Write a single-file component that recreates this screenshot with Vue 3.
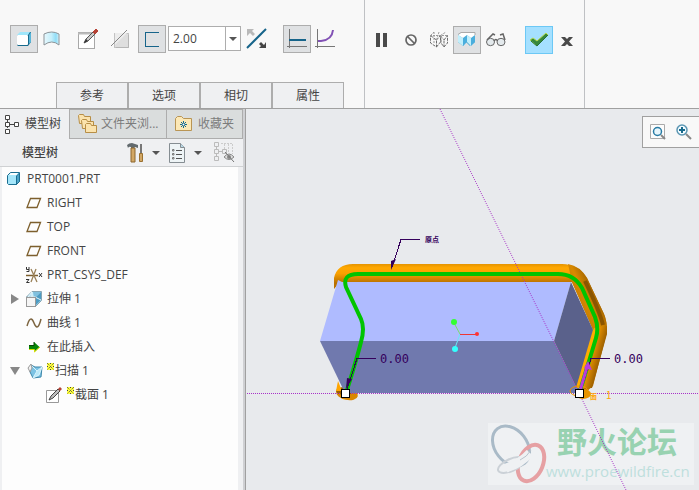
<script setup>
import { ref } from 'vue'

const thickness = ref('2.00')
const ribbonTabs = ['参考', '选项', '相切', '属性']
const tree = [
  { label: 'PRT0001.PRT', icon: 'part', level: 0 },
  { label: 'RIGHT', icon: 'plane', level: 1 },
  { label: 'TOP', icon: 'plane', level: 1 },
  { label: 'FRONT', icon: 'plane', level: 1 },
  { label: 'PRT_CSYS_DEF', icon: 'csys', level: 1 },
  { label: '拉伸 1', icon: 'extrude', level: 1, toggle: 'closed' },
  { label: '曲线 1', icon: 'curve', level: 1 },
  { label: '在此插入', icon: 'insert', level: 1 },
  { label: '扫描 1', icon: 'sweep', level: 1, toggle: 'open', busy: true },
  { label: '截面 1', icon: 'sketch', level: 2, busy: true }
]
</script>

<template>
  <div class="app">
    <header class="ribbon">
      <section class="group options">
        <div class="tools">
          <button class="tool on" aria-label="实体">
            <svg width="16" height="16" viewBox="0 0 16 16">
              <path d="M1 5 5 1H15V11L12 15H2L1 14Z" fill="#176a8c" />
              <path d="M1 4 4 1H14L12 4Z" fill="#9fe6fb" /><path d="M13 4 15 1V11L13 13Z" fill="#58b5d8" />
              <rect x="1" y="4" width="11" height="10" rx="1" fill="#fff" />
            </svg>
          </button>
          <button class="tool" aria-label="曲面">
            <svg width="18" height="16" viewBox="0 0 18 16">
              <defs><linearGradient id="surf"><stop offset="0" stop-color="#e8f8fd" /><stop offset=".5" stop-color="#c4effb" /><stop offset=".8" stop-color="#8fdcf6" /><stop offset="1" stop-color="#d8f4fc" /></linearGradient></defs>
              <path d="M1 3Q9-1 16 3V14Q9 8 1 14Z" fill="url(#surf)" stroke="#8c9499" />
            </svg>
          </button>
          <button class="tool gap-a" aria-label="草绘">
            <svg width="22" height="22" viewBox="0 0 22 22">
              <rect x="1.500" y="4.500" width="16" height="16" fill="#fff" stroke="#a8a8a8" /><path d="M1 5.500H18" stroke="#bbb" stroke-width="2" />
              <path d="M7 15 9 11 17 3 19 5 11 13Z" fill="#c9c9c9" stroke="#555" /><path d="M7 15 9 11 11 13Z" fill="#333" /><path d="M16 4 19 1 21 3 18 6Z" fill="#b64235" stroke="#b64235" />
            </svg>
          </button>
          <button class="tool gap-b" aria-label="移除材料">
            <svg width="18" height="20" viewBox="0 0 18 20">
              <rect x="3.500" y="4.500" width="14" height="14" fill="#dedede" stroke="#999" stroke-dasharray="1 1" /><path d="M4 4H16L4 16Z" fill="#ececec" /><path d="M0 17 16 1" stroke="#888" />
              <path d="M5 18.500H17.500V6" fill="none" stroke="#b5b5b5" />
            </svg>
          </button>
          <button class="tool on gap-b" aria-label="薄板">
            <svg width="16" height="16" viewBox="0 0 16 16"><path d="M15 1H1V15H15" fill="none" stroke="#16648a" stroke-width="1" shape-rendering="crispEdges" /></svg>
          </button>
          <div class="combo">
            <input v-model="thickness" aria-label="厚度" />
            <button aria-label="选择厚度"><span class="caret"></span></button>
          </div>
          <button class="tool" aria-label="反向">
            <svg width="22" height="22" viewBox="0 0 22 22">
              <path d="M1 20 20 1" stroke="#16648a" stroke-width="2" />
              <path d="M1 1H8L6 3 9 6 7 8 4 5 1 8Z" fill="#b9b9b9" /><path d="M20 20H13L15 18 13 16 15 14 18 17 20 14Z" fill="#444" />
            </svg>
          </button>
          <button class="tool on gap-c" aria-label="恒定截面">
            <svg width="20" height="20" viewBox="0 0 20 20"><path d="M2.500 0V19M0 17.500H20" stroke="#777" fill="none" /><path d="M2 11H19" stroke="#16648a" stroke-width="2" /></svg>
          </button>
          <button class="tool" aria-label="可变截面">
            <svg width="20" height="20" viewBox="0 0 20 20"><path d="M2.500 0V19M0 17.500H20" stroke="#777" fill="none" /><path d="M3 12H6Q17 11 18 1" stroke="#8252b5" stroke-width="2" fill="none" /></svg>
          </button>
        </div>
        <nav class="ribbon-tabs"><button v-for="t in ribbonTabs" :key="t">{{ t }}</button></nav>
      </section>
      <section class="group control">
        <button class="tool" aria-label="暂停"><svg width="12" height="14" viewBox="0 0 12 14"><path d="M0 0H4V14H0ZM7 0H11V14H7Z" fill="#4a4a4a" /></svg></button>
        <button class="tool" aria-label="无预览"><svg width="14" height="14" viewBox="0 0 14 14"><circle cx="7" cy="7" r="5" fill="none" stroke="#666" stroke-width="1.700" /><path d="M3.500 3.500 10.500 10.500" stroke="#666" stroke-width="1.700" /></svg></button>
        <button class="tool" aria-label="分离预览">
          <svg width="20" height="18" viewBox="0 0 20 18"><path d="M1.500 4.500 7.500 9V16L1.500 12ZM7.500 9 11.500 4.500V11L7.500 16M12 4.500V12L15 16V9M15 9 18.500 4.500V12L15 16" fill="none" stroke="#6c6c6c" stroke-dasharray="3 1" /><path d="M1 4.500H19M1.500 4.500 5 1M15 9 11.500 4.500 17 1M5 1V13M10 1 7.500 9" fill="none" stroke="#999" stroke-dasharray="2 1" /></svg>
        </button>
        <button class="tool on" aria-label="连接预览">
          <svg width="20" height="16" viewBox="0 0 20 16">
            <path d="M1 3 5 1H18V10L13 14 9 10 6 14 1 10Z" fill="#429fc9" /><path d="M1 3 6 6V14L1 10Z" fill="#c1effc" /><path d="M10 3 14 6V14L10 10Z" fill="#c1effc" /><path d="M6 6 10 3V10L6 14ZM14 6 18 3V10L14 14Z" fill="#4aaedd" /><path d="M1 3 4 1H18V3L14 6 10 3 6 6Z" fill="#fff" /><path d="M1 2.500 4 .5H18V3" fill="none" stroke="#aaa" />
          </svg>
        </button>
        <button class="tool" aria-label="特征预览">
          <svg width="20" height="14" viewBox="0 0 20 14"><g fill="#e4eaed" stroke="#666"><ellipse cx="4.500" cy="9" rx="4" ry="3.700" /><ellipse cx="15" cy="9" rx="4" ry="3.700" /></g><path d="M1 7 7 1 9 2M19 7 17 1 14 2M8 8Q10 5 11.500 8" fill="none" stroke="#666" stroke-width="1.500" /></svg>
        </button>
        <button class="tool accept" aria-label="确定">
          <svg width="20" height="16" viewBox="0 0 20 16"><path d="M1 8 4 6 8 9 17 1 19 3 8 14Z" fill="#36883c" stroke="#b2d94b" /><path d="M2 9 8 14 19 3" fill="none" stroke="#25713b" /></svg>
        </button>
        <button class="tool" aria-label="取消"><svg width="12" height="14" viewBox="0 0 12 14"><path d="M0 4H4L6 6 8 4H12L8 8.500 12 13H8L6 11 4 13H0L4 8.500Z" fill="#4a4a4a" /></svg></button>
      </section>
    </header>

    <main class="workspace">
      <aside class="side">
        <nav class="side-tabs">
          <button class="current">
            <svg width="14" height="19" viewBox="0 0 14 19"><path d="M2.500 5V7M2.500 11V13M5 9.500H9" stroke="#444" /><path d="M.5.5H4.500V4.500H.5ZM.5 7.500H4.500V11.500H.5ZM.5 14.500H4.500V18.500H.5ZM9.500 7.500H13.500V11.500H9.500Z" fill="#fff" stroke="#444" /></svg>
            <span>模型树</span>
          </button>
          <button class="folders">
            <svg width="20" height="20" viewBox="0 0 20 20">
              <g fill="#fbe3ad" stroke="#b78e46"><path d="M.5 1.500 1.500.5H5.500L6.500 2.500H12.500V9.500H1.500Z" /><path d="M3.500 6.500 4.500 5.500H8.500L9.500 7.500H15.500V14.500H4.500Z" /><path d="M7.500 10.500 8.500 9.500H12.500L13.500 11.500H18.500V18.500H7.500Z" /></g>
            </svg>
            <span>文件夹浏...</span>
          </button>
          <button class="favs">
            <svg width="17" height="16" viewBox="0 0 17 16"><path d="M.5 2.500 2.500.5H6.500L8.500 2.500H16.500V14.500H.5Z" fill="#fce8b6" stroke="#b99554" /><path d="M8.500 5V12M5 8.500H12M6 6 11 11M11 6 6 11" stroke="#176a8c" /><circle cx="8.500" cy="8.500" r="1" fill="#fff" /></svg>
            <span>收藏夹</span>
          </button>
        </nav>
        <div class="tree-head">
          <h2>模型树</h2>
          <button aria-label="设置">
            <svg width="17" height="20" viewBox="0 0 17 20"><path d="M0 2Q2 0 5 0L11 2V5L8 4 7 5H4V4Q2 3 1 5Z" fill="#626a6e" /><path d="M4 5H8V19H4Z" fill="#d2a765" stroke="#8c672e" /><path d="M14 1V10" stroke="#777" stroke-width="2" /><path d="M12.500 10.500H15.500V18.500H12.500Z" fill="#d2a765" stroke="#9a7130" /></svg>
            <span class="caret"></span>
          </button>
          <button aria-label="显示">
            <svg width="17" height="20" viewBox="0 0 17 20"><path d="M.5.5H11.500L15.500 4.500V19.500H.5Z" fill="#eef4f6" stroke="#858d92" /><path d="M11.500.5V4.500H15.500" fill="#b8d8e5" stroke="#858d92" /><path d="M7 7.500H13M7 11.500H13M7 15.500H13" stroke="#555" /><path d="M3.500 6.500H5V8H3.500ZM3.500 10.500H5V12H3.500ZM3.500 14.500H5V16H3.500Z" fill="none" stroke="#777" /></svg>
            <span class="caret"></span>
          </button>
          <button class="last" aria-label="隐藏列">
            <svg width="21" height="21" viewBox="0 0 21 21"><g fill="none" stroke="#bbb"><path d="M.5.5H4.500V4.500H.5ZM.5 7.500H4.500V11.500H.5ZM.5 14.500H4.500V18.500H.5ZM8.500 7.500H12.500V11.500H8.500ZM2.500 5V7M2.500 12V14M5 9.500H8" /><path d="M7 1.500H19M10.500 2V7M14.500 2V10M18.500 2V12" stroke="#ccc" stroke-dasharray="2 1" /></g><path d="M10 15Q15 9 20 15Q15 20 10 15Z" fill="#ddd" stroke="#888" /><circle cx="15" cy="15" r="2" fill="#888" /><path d="M11 10 20 20" stroke="#777" /></svg>
          </button>
        </div>
        <ul class="tree">
          <li v-for="node in tree" :key="node.label" :class="'level' + node.level">
            <button v-if="node.toggle" class="twist" :class="node.toggle" :aria-label="'展开 ' + node.label"></button>
            <span class="node-icon">
              <svg v-if="node.icon === 'part'" class="nudge" width="14" height="14" viewBox="0 0 14 14"><path d="M.5 3.500 3.500.5H12.500V9.500L9.500 12.500H1.500L.5 11.500Z" fill="#a5e6fa" stroke="#1b6e91" /><path d="M9.500 4V12.500L12.500 9.500V1Z" fill="#4aa3c8" stroke="#1b6e91" /><path d="M2 3 4 1H11L9.500 3Z" fill="#fff" /></svg>
              <svg v-else-if="node.icon === 'plane'" width="16" height="12" viewBox="0 0 16 12"><path d="M4.500 1.500H14.500L11 10.500H1Z" fill="none" stroke="#7d5f2d" stroke-width="1.300" /></svg>
              <svg v-else-if="node.icon === 'csys'" width="18" height="17" viewBox="0 0 18 17"><path d="M0 8.500H12" stroke="#7d5f2d" stroke-width="1.500" /><path d="M5 2 11 15M10 2 5 15" stroke="#9a8158" stroke-width="1.300" /><path d="M.5 0V2.500H3M3 0V4.500H.5M0 12.500H3L.5 15.500H3.500M13 6 16 10M16 6 13 10" fill="none" stroke="#333" /></svg>
              <svg v-else-if="node.icon === 'extrude'" width="17" height="16" viewBox="0 0 17 16"><path d="M.5 6 6 .5H15.500V9.500L9.500 15.500V6Z" fill="#b9e4f4" stroke="#86a5b3" /><path d="M7 1H15L10 6H8Z" fill="#7fc0de" /><path d="M15 1V9L10 14V6Z" fill="#4e9cc3" /><path d="M6 1V6M6 1 2 6H9L15 9" stroke="#e6f7fc" fill="none" /><rect x=".5" y="6.500" width="9" height="9" fill="#f5f5f5" stroke="#999" /></svg>
              <svg v-else-if="node.icon === 'curve'" width="16" height="12" viewBox="0 0 16 12"><path d="M1 9C2 6 3 2 5 2C8 2 8 10 11 10C13 10 14 6 15 2" fill="none" stroke="#7d6540" stroke-width="1.500" /></svg>
              <svg v-else-if="node.icon === 'insert'" class="shift" width="12" height="12" viewBox="0 0 12 12"><path d="M0 4H5V1L10.500 6 5 11V8H0Z" fill="#078607" /><path d="M0 8.500H5.500V11L11 6" fill="none" stroke="#d5df00" /><path d="M0 4.500H5V1" fill="none" stroke="#064706" /></svg>
              <svg v-else-if="node.icon === 'sweep'" class="nudge" width="17" height="16" viewBox="0 0 17 16"><path d="M4 2 8 4 15 4 14 14 6 15 3 9Z" fill="#7cc3e4" stroke="#3c86a9" /><path d="M4 2 10 8 15 4 12 12 6 15 10 8" fill="#b9e8f8" stroke="#d8f4fc" /><path d="M1 5 4 1 5 5 3 9Z" fill="#f0f0f0" stroke="#999" /></svg>
              <svg v-else width="17" height="17" viewBox="0 0 17 17"><path d="M.5 3.500H12.500V15.500H.5Z" fill="#fff" stroke="#999" /><path d="M3 13 5 9 12 2 14 4 7 11Z" fill="#bcbcbc" stroke="#444" /><path d="M12 2 14 0 16 2 14 4Z" fill="#b64235" /></svg>
            </span>
            <svg v-if="node.busy" class="star" width="7" height="7" viewBox="0 0 7 7"><rect width="7" height="7" fill="#ffff3c" /><path d="M0 0 7 7M7 0 0 7" stroke="#444" stroke-dasharray="1 1" /><path d="M0 3.500H1M6 3.500H7M3.500 0V1M3.500 6V7" stroke="#444" /></svg>
            <span>{{ node.label }}</span>
          </li>
        </ul>
      </aside>

      <div class="viewport">
        <svg class="scene" viewBox="247 109 452 381" preserveAspectRatio="xMinYMin meet">
          <defs>
            <linearGradient id="tubeTop" x1="0" y1="264" x2="0" y2="283" gradientUnits="userSpaceOnUse"><stop offset="0" stop-color="#e59400" /><stop offset=".2" stop-color="#ffa800" /><stop offset=".5" stop-color="#f9a000" /><stop offset="1" stop-color="#b87000" /></linearGradient>
            <linearGradient id="tubeSide" gradientUnits="userSpaceOnUse" x1="575" y1="300" x2="600" y2="288"><stop offset="0" stop-color="#c47b00" /><stop offset=".4" stop-color="#d88900" /><stop offset="1" stop-color="#855000" /></linearGradient>
            <linearGradient id="tubeLow" gradientUnits="userSpaceOnUse" x1="584" y1="358" x2="602" y2="363"><stop offset="0" stop-color="#ffad00" /><stop offset=".4" stop-color="#e08d00" /><stop offset="1" stop-color="#855000" /></linearGradient>
          </defs>
          <rect x="488" y="423" width="206" height="62" fill="#eff1f3" />
          <g fill="none">
            <ellipse cx="511" cy="446" rx="16" ry="22" transform="rotate(-38 511 446)" stroke="#a9bac7" stroke-width="3" />
            <ellipse cx="531" cy="463" rx="12" ry="19" transform="rotate(22 531 463)" stroke="#e6a0a3" stroke-width="4" />
            <ellipse cx="511" cy="465" rx="14" ry="6" transform="rotate(-24 511 465)" stroke="#cbd1d7" stroke-width="2" />
            <path d="M506 468Q520 464 530 453" stroke="#eff1f3" stroke-width="9" /><path d="M520 460Q527 457 531 450" stroke="#b9c3cc" />
          </g>
          <text x="557" y="453" class="brand">野火论坛</text>
          <text x="546" y="477" class="site">www.proewildfire.cn</text>

          <ellipse cx="347" cy="394" rx="11" ry="6" transform="rotate(12 347 394)" fill="#d98700" />
          <ellipse cx="345" cy="391" rx="9" ry="4" fill="#9a6000" />
          <path d="M334 289V278Q337 264 353 264H562Q578 264 587 278L604 314Q607 320 607 332L593 386 586 392 577 386 594 332 572 282H340Z" fill="url(#tubeTop)" />
          <path d="M568 264Q580 266 587 278L604 314Q607 322 607 332H594L572 282Z" fill="url(#tubeSide)" />
          <path d="M594 328 607 326V334L592 388H577Z" fill="url(#tubeLow)" />
          <path d="M338 381 342 391H336Z" fill="#ffa500" />
          <path d="M338 280 320 341H554L571 282H342Z" fill="#afbbff" />
          <path d="M320 341H554L579 393H345Z" fill="#7079ae" />
          <path d="M571 282 554 341 579 393 594 332Z" fill="#5a618b" />
          <path d="M595 330 578 388" stroke="#ffad00" stroke-width="4" />
          <path d="M585 281Q600 312 603 325" stroke="#8b5500" stroke-width="4" fill="none" />
          <path d="M247 393.500H699" class="axis" stroke-dasharray="1 1" />
          <path d="M440 109 579 393" class="slant" stroke-dasharray="1 1.226" />
          <path d="M579 393 626 490" class="slant" stroke-dasharray="1 1.222" />
          <path d="M347 390Q357 358 361 342Q365 328 361 319L346 287Q342 274 358 274H558Q574 274 582 288L595 317Q599 328 596 338L580 391" fill="none" stroke="#00c400" stroke-width="4" />
          <ellipse cx="579" cy="391" rx="9" ry="5" fill="none" stroke="#e89500" stroke-width="1" />
          <ellipse cx="583" cy="394" rx="8" ry="5" fill="#e89300" />
          <g fill="none" stroke="#35005c" shape-rendering="crispEdges"><path d="M420 239.500H401L392 267M376 358.500H357L347 389M610 358.500H591L582 387" /></g>
          <path d="M391 270 391 261 396 259Z M346 389 347 378 352 379Z" fill="#35005c" />
          <path d="M580 391 587 367" stroke="#b83ddc" stroke-width="3" /><path d="M588 361 592 370 584 368Z" fill="#b83ddc" />
          <rect x="341.500" y="389.500" width="8" height="8" class="handle" />
          <rect x="575.500" y="389.500" width="8" height="8" class="handle" />
          <text x="380" y="363" class="dim">0.00</text>
          <text x="614" y="363" class="dim">0.00</text>
          <text x="425" y="242" class="note">原点</text>
          <text x="590" y="399" class="note orange">面</text><text x="606" y="399" class="note orange one">1</text>
          <path d="M460 334 454 323" stroke="#7bdc6b" /><path d="M460 334 455 348" stroke="#6ce7f6" /><path d="M460 334.500H477" stroke="#ee3535" />
          <circle cx="454" cy="322" r="3" fill="#33ff33" /><circle cx="455" cy="349" r="3" fill="#33ffff" /><circle cx="477" cy="334" r="2" fill="#ff3333" />
        </svg>
        <div class="view-tools">
          <button aria-label="重新调整">
            <svg width="16" height="16" viewBox="0 0 16 16"><path d="M.5.5H14.500V14.500H.5Z" fill="#fcfcfc" stroke="#aaa" /><path d="M11 11 15 15" stroke="#888" stroke-width="2" /><circle cx="7.500" cy="7.500" r="4" fill="#e7f5fb" stroke="#287ba4" stroke-width="1.500" /></svg>
          </button>
          <button aria-label="放大">
            <svg width="16" height="16" viewBox="0 0 16 16"><path d="M10 10 15 15" stroke="#888" stroke-width="2" /><circle cx="6" cy="6" r="5" fill="#f2fbff" stroke="#5b96b3" stroke-width="1.500" /><path d="M6 3V9M3 6H9" stroke="#176a8c" stroke-width="2" /></svg>
          </button>
        </div>
      </div>
    </main>
  </div>
</template>

<style>
body { background: #e8eaed; }
</style>

<style scoped>
.app { min-height: 100vh; display: flex; flex-direction: column; overflow: hidden; font: 12px/16px "Open Sans", "Noto Sans CJK SC", sans-serif; color: #444; }
button { font: inherit; color: inherit; border: 0; padding: 0; margin: 0; background: none; }
svg { display: block; flex: none; }
.ribbon { display: flex; background: #f8f8f8; border-bottom: 1px solid #a0a0a0; }
.group { border-right: 1px solid #bfc1c4; }
.options { display: flex; flex-direction: column; gap: 29px; padding: 25px 20px 0 10px; }
.tools, .control { display: flex; align-items: flex-start; }
.tool { width: 28px; height: 28px; display: flex; align-items: center; justify-content: center; flex: none; box-sizing: border-box; }
.tool.on { background: #dfe1e3; border: 1px solid #adadad; }
.gap-a { margin-left: 8px; }
.gap-b { margin-left: 4px; }
.gap-c { margin-left: 12px; }
.combo { display: flex; width: 73px; height: 25px; margin: 1px 2px 0; box-sizing: border-box; border: 1px solid #adadad; background: #fff; }
.combo input { flex: 1; min-width: 0; border: 0; padding: 0 4px; font: inherit; color: #444; background: none; outline: 0; }
.combo button { width: 15px; border-left: 1px solid #adadad; display: grid; place-items: center; }
.caret { width: 0; height: 0; border: 4px solid transparent; border-top-color: #555; border-bottom: 0; }
.ribbon-tabs { display: flex; margin-left: 46px; }
.ribbon-tabs button { width: 72px; height: 26px; box-sizing: border-box; border: 1px solid #adadad; border-bottom: 0; background: #eff0f2; }
.control { padding: 26px 3px 0; }
.control .tool:nth-child(2), .control .tool:nth-child(5) { margin-left: 1px; }
.control .accept { background: #a5e0ff; border: 1px solid #6cc8f5; margin-left: 15px; }
.workspace { flex: 1; display: flex; background: #e8eaed; }
.side { width: 243px; flex: none; display: flex; flex-direction: column; background: #eff0f2; border-right: 2px solid #cfd0d3; box-shadow: 1px 0 #a0a0a0; }
.side-tabs { display: flex; height: 30px; }
.side-tabs button { display: flex; align-items: center; box-sizing: border-box; background: #dadddd; border: 1px solid #adadad; border-left: 0; color: #7c7c7c; white-space: nowrap; }
.side-tabs .current { width: 70px; gap: 6px; padding-left: 5px; background: #eff0f2; border-width: 0 1px 0 0; color: #444; }
.side-tabs .folders { width: 97px; gap: 3px; padding-left: 8px; }
.side-tabs .favs { width: 76px; gap: 6px; padding-left: 8px; }
.tree-head { display: flex; align-items: center; height: 28px; box-sizing: border-box; padding: 0 8px 0 22px; border-bottom: 1px solid #cfd1d3; }
.tree-head h2 { flex: 1; margin: 0; font-size: 12px; font-weight: 500; }
.tree-head button { display: flex; align-items: center; gap: 8px; margin-right: 9px; }
.tree-head button:nth-of-type(2) { margin-right: 12px; }
.tree-head .last { margin: 0; }
.tree { flex: 1; margin: 0 5px 0 2px; padding: 0; list-style: none; background: #fdfdfd; }
.tree li { position: relative; display: flex; align-items: center; height: 24px; padding-left: 4px; }
.tree .level1 { padding-left: 24px; }
.tree .level2 { padding-left: 44px; }
.node-icon { width: 21px; display: flex; }
.nudge { margin-left: 1px; }
.shift { margin-left: 3px; }
.star { align-self: flex-start; margin: 4px 1px 0 0; }
.twist { position: absolute; left: 9px; width: 8px; height: 10px; background: #888; }
.twist.closed { clip-path: polygon(0 0, 100% 50%, 0 100%); }
.twist.open { clip-path: polygon(0 10%, 100% 10%, 50% 90%); width: 10px; left: 8px; }
.viewport { position: relative; flex: 1; min-width: 0; margin-left: 2px; overflow: hidden; }
.scene { width: 100%; height: auto; }
.view-tools { position: absolute; top: 7px; right: 0; display: flex; align-items: center; gap: 10px; height: 32px; box-sizing: border-box; padding: 0 7px; border: 1px solid #a0a0a0; border-right: 0; background: #f8f8f8; }
.axis, .slant { fill: none; stroke: #a832c8; stroke-width: 1; }
.axis { shape-rendering: crispEdges; }
.handle { fill: #fff; stroke: #000; }
.brand { font: 700 30px "Noto Sans CJK SC", sans-serif; fill: #98d2b1; }
.site { font: 15px "Open Sans", sans-serif; fill: #bedfdd; }
.dim { font: 12px "DejaVu Sans Mono", monospace; fill: #35005c; }
.note { font: 700 7px "Noto Sans CJK SC", sans-serif; fill: #35005c; }
.orange { fill: #ffa500; }
.one { font-size: 10px; font-weight: 400; }
</style>
